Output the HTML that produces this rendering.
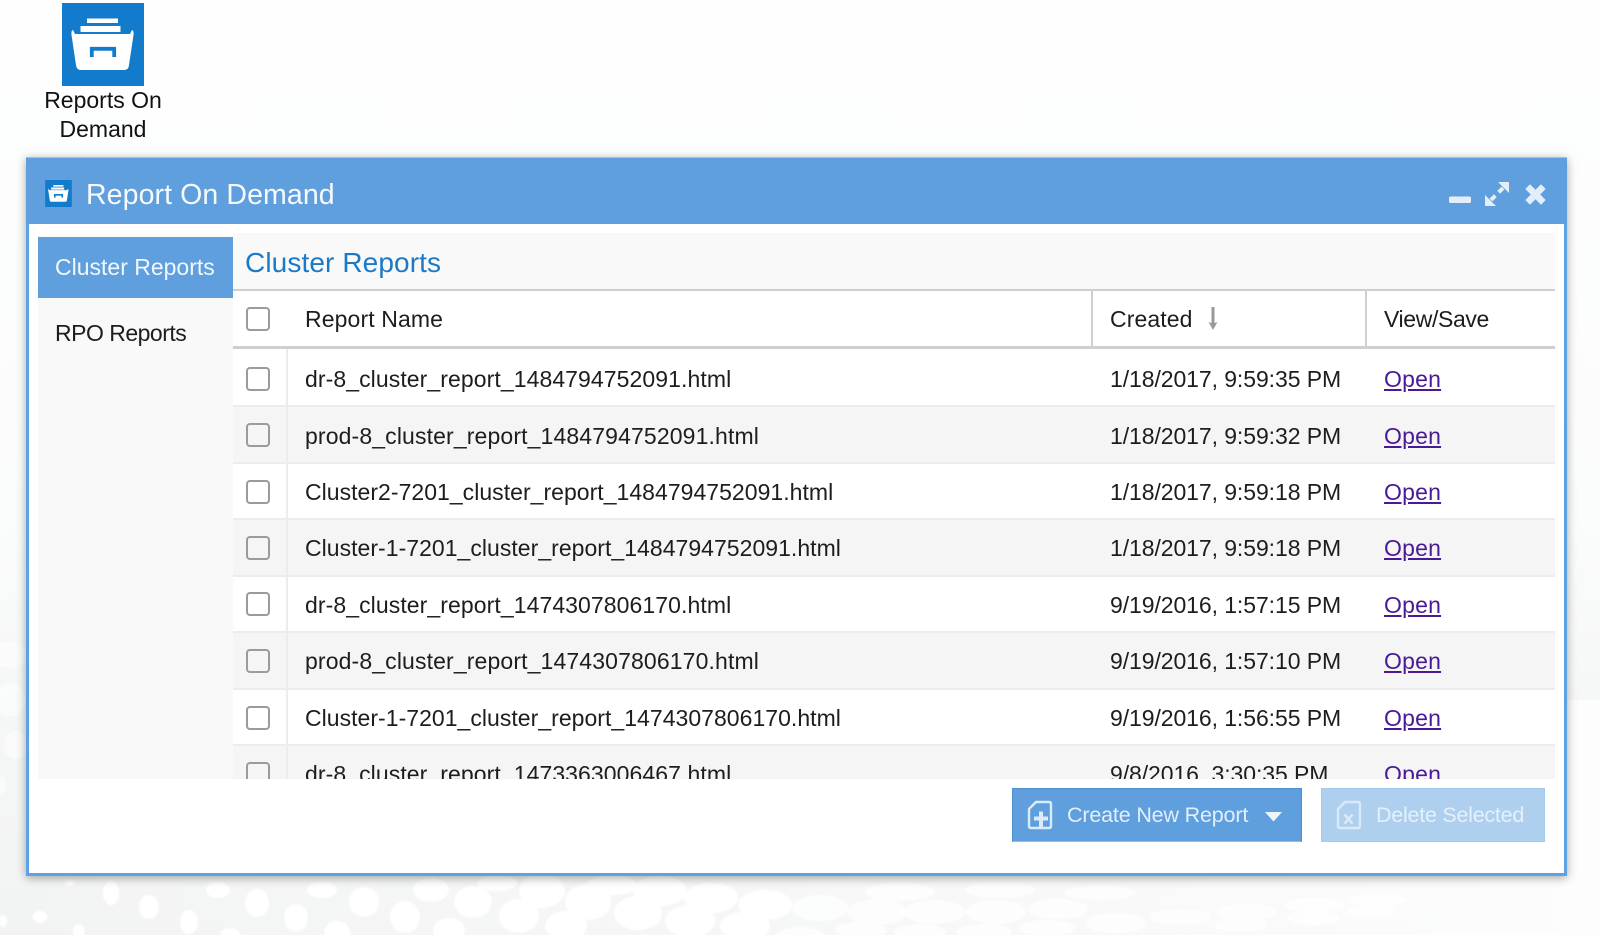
<!DOCTYPE html>
<html lang="en"><head><meta charset="utf-8"><title>Report On Demand</title>
<style>
html,body{margin:0;padding:0;width:1600px;height:935px;overflow:hidden;background:#fdfdfd}
body{position:relative;font-family:"Liberation Sans",Arial,sans-serif;font-size:23px;color:#1d1d1d}
.a{position:absolute}
.t{position:absolute;white-space:nowrap;line-height:30px}
#bg{position:absolute;left:0;top:0}
#win{position:absolute;left:26px;top:157px;width:1541px;height:719px;background:#fff;box-shadow:0 2px 9px rgba(0,0,0,.35)}
.row{position:absolute;left:233px;width:1322px;height:56.44px;box-sizing:border-box;border-bottom:2px solid #ececec}
.cb{position:absolute;width:24px;height:24px;box-sizing:border-box;border:2px solid #9b9b9b;border-radius:4px;background:transparent}
a{color:#4a1a96;text-decoration:underline;letter-spacing:.2px}
.f{letter-spacing:.03px}.d{letter-spacing:.08px}.p{letter-spacing:.13px}.w{letter-spacing:-.08px}
</style></head><body>
<svg id="bg" width="1600" height="935" viewBox="0 0 1600 935">
<defs>
<linearGradient id="v" x1="0" y1="0" x2="0" y2="1"><stop offset="0" stop-color="#fefefe"/><stop offset=".55" stop-color="#fbfcfc"/><stop offset=".78" stop-color="#f5f6f6"/><stop offset="1" stop-color="#f2f3f3"/></linearGradient>
<linearGradient id="h" x1="0" y1="0" x2="1" y2="0"><stop offset="0" stop-color="#fdfdfd" stop-opacity="0"/><stop offset=".35" stop-color="#f8f8f8" stop-opacity=".5"/><stop offset="1" stop-color="#fdfdfd"/></linearGradient>
<filter id="b"><feGaussianBlur stdDeviation=".9"/></filter>
</defs>
<rect width="1600" height="935" fill="url(#v)"/>
<rect y="700" width="1600" height="235" fill="url(#h)"/>
<g fill="#fff" filter="url(#b)">
<ellipse cx="70" cy="883" rx="5" ry="3"/><ellipse cx="111" cy="893" rx="8" ry="12"/><ellipse cx="218" cy="890" rx="12" ry="8"/><ellipse cx="149" cy="907" rx="10" ry="12"/><ellipse cx="257" cy="903" rx="12" ry="14"/><ellipse cx="322" cy="890" rx="15" ry="8"/><ellipse cx="364" cy="902" rx="15" ry="15"/><ellipse cx="431" cy="890" rx="18" ry="12"/><ellipse cx="189" cy="922" rx="9" ry="12"/><ellipse cx="40" cy="917" rx="7" ry="6"/><ellipse cx="296" cy="918" rx="12" ry="14"/><ellipse cx="405" cy="917" rx="15" ry="16"/><ellipse cx="473" cy="902" rx="19" ry="16"/><ellipse cx="542" cy="891" rx="23" ry="17"/><ellipse cx="519" cy="916" rx="20" ry="17"/><ellipse cx="497" cy="883" rx="20" ry="8"/><ellipse cx="588" cy="902" rx="23" ry="18"/><ellipse cx="566" cy="926" rx="21" ry="15"/><ellipse cx="660" cy="891" rx="27" ry="15"/><ellipse cx="638" cy="913" rx="24" ry="17"/><ellipse cx="711" cy="898" rx="27" ry="15"/><ellipse cx="765" cy="905" rx="27" ry="15"/><ellipse cx="690" cy="921" rx="25" ry="16"/><ellipse cx="745" cy="926" rx="25" ry="14"/><ellipse cx="612" cy="885" rx="25" ry="10"/><ellipse cx="449" cy="930" rx="16" ry="12"/><ellipse cx="337" cy="933" rx="13" ry="12"/><ellipse cx="230" cy="935" rx="10" ry="7"/><ellipse cx="79" cy="931" rx="6" ry="7"/><ellipse cx="3" cy="921" rx="4" ry="6"/>
</g>
<g fill="#fff" opacity=".55" filter="url(#b)">
<ellipse cx="10" cy="700" rx="16" ry="16"/><ellipse cx="16" cy="745" rx="12" ry="14"/><ellipse cx="0" cy="785" rx="6" ry="10"/><ellipse cx="8" cy="655" rx="20" ry="12"/>
</g>
<g fill="#fff" opacity=".75" filter="url(#b)">
<ellipse cx="820" cy="908" rx="28" ry="13"/><ellipse cx="877" cy="912" rx="30" ry="13"/><ellipse cx="935" cy="912" rx="30" ry="12"/><ellipse cx="996" cy="912" rx="30" ry="12"/><ellipse cx="1058" cy="909" rx="30" ry="10"/><ellipse cx="1116" cy="923" rx="30" ry="10"/><ellipse cx="1180" cy="917" rx="30" ry="8"/><ellipse cx="1246" cy="912" rx="30" ry="8"/><ellipse cx="1241" cy="925" rx="26" ry="7"/><ellipse cx="1313" cy="918" rx="26" ry="7"/><ellipse cx="1315" cy="905" rx="30" ry="7"/><ellipse cx="1379" cy="900" rx="30" ry="6"/><ellipse cx="1371" cy="911" rx="25" ry="6"/><ellipse cx="861" cy="930" rx="26" ry="8"/><ellipse cx="920" cy="932" rx="26" ry="8"/><ellipse cx="984" cy="932" rx="28" ry="8"/><ellipse cx="1047" cy="928" rx="28" ry="8"/><ellipse cx="800" cy="935" rx="24" ry="8"/><ellipse cx="1000" cy="890" rx="35" ry="8"/><ellipse cx="900" cy="892" rx="35" ry="9"/><ellipse cx="1100" cy="893" rx="35" ry="7"/>
</g>
</svg>

<svg class="a" style="left:62px;top:3px" width="82" height="83" viewBox="0 0 82 83"><rect width="82" height="83" fill="#127bcb"/>
<g fill="#fff"><rect x="25" y="15.500" width="31" height="4.500"/><rect x="18.500" y="23" width="40" height="6" rx=".5"/>
<path d="M11 27q-2 .5-1.500 5L14 62q.5 5 5 5H62q4.500 0 5-5L71.500 32q.5-4.500-1.500-5l-2 4H13z"/></g>
<path d="M29.800 54V45.800H52.200V54" fill="none" stroke="#127bcb" stroke-width="3.800"/></svg>
<div class="t" style="left:0;width:206px;text-align:center;top:85px;color:#111">Reports On</div>
<div class="t" style="left:0;width:206px;text-align:center;top:114px;color:#111">Demand</div>

<div id="win"></div>
<div class="a" style="left:26px;top:157px;width:1541px;height:67px;background:#5f9fdd;border-top:1px solid #9cc4ea;box-sizing:border-box"></div>
<div class="a" style="left:26px;top:224px;width:3px;height:652px;background:#5ba3e5"></div>
<div class="a" style="left:1564px;top:224px;width:3px;height:652px;background:#5ba3e5"></div>
<div class="a" style="left:26px;top:873px;width:1541px;height:3px;background:#5ba3e5"></div>

<svg class="a" style="left:45px;top:180px" width="27" height="27" viewBox="0 0 82 83"><rect width="82" height="83" fill="#127bcb"/>
<g fill="#fff"><rect x="25" y="15.500" width="31" height="5"/><rect x="18.500" y="23" width="40" height="6.500"/>
<path d="M11 27q-2 .5-1.500 5L14 62q.5 5 5 5H62q4.500 0 5-5L71.500 32q.5-4.500-1.500-5l-2 4H13z"/></g>
<path d="M29.500 54V45.500H52.500V54" fill="none" stroke="#127bcb" stroke-width="5"/></svg>
<div class="t" style="left:86px;top:180px;font-size:28.500px;line-height:30px;color:#fff;letter-spacing:.1px;opacity:.95">Report On Demand</div>

<svg class="a" style="left:1445px;top:178px" width="105" height="32" viewBox="0 0 105 32"><g fill="#e3eef9">
<rect x="4" y="18.500" width="22" height="6.500" rx="1.500"/>
<path d="M40 28V17l11 11zM64 4H53l11 11z"/>
<path d="M46 22l4.300-4.300M58 10l-4.300 4.300" stroke="#e3eef9" stroke-width="4" fill="none"/>
<path d="M81 11l4-4 5.500 5.500L96 7l4 4-5.500 5.500L100 22l-4 4-5.500-5.500L85 26l-4-4 5.500-5.500z" stroke="#e3eef9" stroke-width="1"/></g></svg>

<div class="a" style="left:38px;top:236px;width:195px;height:543px;background:#f9f9f9"></div>
<div class="a" style="left:38px;top:237px;width:195px;height:61px;background:#5f9fdd"></div>
<div class="t" style="left:55px;top:252px;color:#f1f7fd">Cluster Reports</div>
<div class="t" style="left:55px;top:318px;letter-spacing:-.5px">RPO Reports</div>

<div id="main" class="a" style="left:0;top:0;width:1600px;height:779px;overflow:hidden;pointer-events:none">
<div class="a" style="left:233px;top:233px;width:1322px;height:56px;background:#f9f9f9"></div>
<div class="t" style="left:245px;top:248px;font-size:28px;color:#1a7ac8;letter-spacing:.11px">Cluster Reports</div>
<div class="a" style="left:233px;top:289px;width:1322px;height:2px;background:#cfcfcf"></div>
<div class="a" style="left:1091px;top:291px;width:2px;height:55px;background:#cfcfcf"></div>
<div class="a" style="left:1365px;top:291px;width:2px;height:55px;background:#cfcfcf"></div>
<div class="a" style="left:233px;top:346px;width:1322px;height:3px;background:#cfcfcf"></div>
<div class="cb" style="left:246px;top:307px"></div>
<div class="t" style="left:305px;top:304px;letter-spacing:.12px">Report Name</div>
<div class="t" style="left:1110px;top:304px;letter-spacing:.1px">Created</div>
<svg class="a" style="left:1205px;top:305px" width="16" height="26" viewBox="0 0 16 26"><path d="M6.500 2h3v16l3-1-4.500 8-4.500-8 3 1z" fill="#999"/></svg>
<div class="t" style="left:1384px;top:304px;letter-spacing:-.37px">View/Save</div>

<div class="row" style="top:351px;background:#fff"></div>
<div class="row" style="top:407.440px;background:#f5f5f5"></div>
<div class="row" style="top:463.880px;background:#fff"></div>
<div class="row" style="top:520.320px;background:#f5f5f5"></div>
<div class="row" style="top:576.760px;background:#fff"></div>
<div class="row" style="top:633.200px;background:#f5f5f5"></div>
<div class="row" style="top:689.640px;background:#fff"></div>
<div class="row" style="top:746.080px;background:#f5f5f5"></div>
<div class="a" style="left:286px;top:349px;width:2px;height:430px;background:#ececec"></div>

<div class="cb" style="left:246px;top:367px"></div><div class="t d" style="left:305px;top:364px">dr-8_cluster_report_1484794752091.html</div><div class="t w" style="left:1110px;top:364px">1/18/2017, 9:59:35 PM</div><div class="t" style="left:1384px;top:364px"><a>Open</a></div>
<div class="cb" style="left:246px;top:423px"></div><div class="t p" style="left:305px;top:420.500px">prod-8_cluster_report_1484794752091.html</div><div class="t w" style="left:1110px;top:420.500px">1/18/2017, 9:59:32 PM</div><div class="t" style="left:1384px;top:420.500px"><a>Open</a></div>
<div class="cb" style="left:246px;top:480px"></div><div class="t f" style="left:305px;top:477px">Cluster2-7201_cluster_report_1484794752091.html</div><div class="t w" style="left:1110px;top:477px">1/18/2017, 9:59:18 PM</div><div class="t" style="left:1384px;top:477px"><a>Open</a></div>
<div class="cb" style="left:246px;top:536px"></div><div class="t f" style="left:305px;top:533px">Cluster-1-7201_cluster_report_1484794752091.html</div><div class="t w" style="left:1110px;top:533px">1/18/2017, 9:59:18 PM</div><div class="t" style="left:1384px;top:533px"><a>Open</a></div>
<div class="cb" style="left:246px;top:592px"></div><div class="t d" style="left:305px;top:590px">dr-8_cluster_report_1474307806170.html</div><div class="t w" style="left:1110px;top:590px">9/19/2016, 1:57:15 PM</div><div class="t" style="left:1384px;top:590px"><a>Open</a></div>
<div class="cb" style="left:246px;top:649px"></div><div class="t p" style="left:305px;top:646px">prod-8_cluster_report_1474307806170.html</div><div class="t w" style="left:1110px;top:646px">9/19/2016, 1:57:10 PM</div><div class="t" style="left:1384px;top:646px"><a>Open</a></div>
<div class="cb" style="left:246px;top:706px"></div><div class="t f" style="left:305px;top:703px">Cluster-1-7201_cluster_report_1474307806170.html</div><div class="t w" style="left:1110px;top:703px">9/19/2016, 1:56:55 PM</div><div class="t" style="left:1384px;top:703px"><a>Open</a></div>
<div class="cb" style="left:246px;top:762px"></div><div class="t d" style="left:305px;top:759px">dr-8_cluster_report_1473363006467.html</div><div class="t w" style="left:1110px;top:759px">9/8/2016, 3:30:35 PM</div><div class="t" style="left:1384px;top:759px"><a>Open</a></div>
</div>

<div class="a" style="left:1012px;top:788px;width:290px;height:54px;background:#5f9fdd;border:1px solid #4d90d2;border-bottom-color:#8fbce6;box-sizing:border-box"></div>
<svg class="a" style="left:1026px;top:799px" width="28" height="32" viewBox="0 0 28 32"><path d="M10 3H23q2 0 2 2V27q0 2-2 2H5q-2 0-2-2V10z" fill="none" stroke="#dcebf9" stroke-width="2.400"/><path d="M13 12.500h4v5h5v4h-5v6.500h-4v-6.500H8v-4h5z" fill="#dcebf9"/></svg>
<div class="t" style="left:1067px;top:800px;font-size:21.500px;color:#e2eefa;letter-spacing:-.17px">Create New Report</div>
<svg class="a" style="left:1265px;top:811px" width="17" height="11" viewBox="0 0 17 11"><path d="M0 1H17L8.500 10.500z" fill="#eef5fc"/></svg>

<div class="a" style="left:1321px;top:788px;width:224px;height:54px;background:#aed0ee;border:1px solid #a5cbec;box-sizing:border-box"></div>
<svg class="a" style="left:1335px;top:799px" width="28" height="32" viewBox="0 0 28 32"><path d="M10 3H23q2 0 2 2V27q0 2-2 2H5q-2 0-2-2V10z" fill="none" stroke="#dbe9f7" stroke-width="2.400"/><path d="M9.500 15.500l8 9M17.500 15.500l-8 9" stroke="#dbe9f7" stroke-width="2.600" fill="none"/></svg>
<div class="t" style="left:1376px;top:800px;font-size:21.500px;color:#e5f0fa;letter-spacing:-.25px">Delete Selected</div>
</body></html>
